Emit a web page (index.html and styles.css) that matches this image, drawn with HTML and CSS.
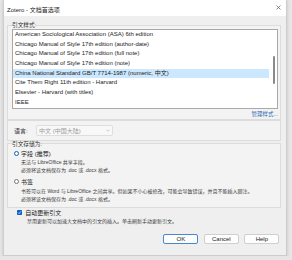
FILE: index.html
```html
<!DOCTYPE html>
<html lang="zh-CN">
<head>
  <meta charset="UTF-8" />
  <title>Zotero - 文档首选项</title>
  <link rel="stylesheet" href="styles.css">
</head>
<body>
  <div class="window">
    <div class="titlebar">
      <span class="title">Zotero - 文档首选项</span>
      <span class="close-btn">
        <svg width="5" height="5" viewBox="0 0 5 5"><path d="M0.5 0.5 L4.5 4.5 M4.5 0.5 L0.5 4.5" stroke="#555" stroke-width="0.7" fill="none"/></svg>
      </span>
    </div>
    <div class="dialog">
      <fieldset class="group styles-group">
        <legend>引文样式:</legend>
        <div class="style-list">
          <div class="style-item">American Sociological Association (ASA) 6th edition</div>
          <div class="style-item">Chicago Manual of Style 17th edition (author-date)</div>
          <div class="style-item">Chicago Manual of Style 17th edition (full note)</div>
          <div class="style-item">Chicago Manual of Style 17th edition (note)</div>
          <div class="style-item selected">China National Standard GB/T 7714-1987 (numeric, 中文)</div>
          <div class="style-item">Cite Them Right 11th edition - Harvard</div>
          <div class="style-item">Elsevier - Harvard (with titles)</div>
          <div class="style-item">IEEE</div>
          <!-- scrollbar thumb drawn over the list -->
          <div class="scroll-thumb"></div>
        </div>
        <div class="manage-row"><a class="manage-link">管理样式...</a></div>
      </fieldset>

      <div class="lang-box">
        <span class="lang-label">语言:</span>
        <div class="select">
          <span>中文 (中国大陆)</span>
          <svg width="4" height="3" viewBox="0 0 4 3"><path d="M0.4 0.7 L2 2.3 L3.6 0.7" stroke="#aaa" stroke-width="0.6" fill="none"/></svg>
        </div>
      </div>

      <fieldset class="group storage-group">
        <legend>引文存储为:</legend>
        <label class="option">
          <span class="radio checked"></span>
          <span>字段 (推荐)</span>
        </label>
        <div class="hint">
          <div>无法与 LibreOffice 共享字段。</div>
          <div>必须将该文档保存为 .doc 或 .docx 格式。</div>
        </div>
        <label class="option second">
          <span class="radio"></span>
          <span>书签</span>
        </label>
        <div class="hint tall">
          <div>书签可以在 Word 与 LibreOffice 之间共享。但如果不小心被修改，可能会导致错误，并且不能插入脚注。</div>
          <div>必须将该文档保存为 .doc 或 .docx 格式。</div>
        </div>
      </fieldset>

      <label class="check-row">
        <svg class="checkbox" width="5" height="5" viewBox="0 0 5 5"><rect x="0" y="0" width="5" height="5" rx="0.8" fill="#0b62c1"/><path d="M1.1 2.6 L2.1 3.6 L3.9 1.4" stroke="#fff" stroke-width="0.7" fill="none"/></svg>
        <span>自动更新引文</span>
      </label>
      <div class="hint check-hint">禁用更新可以加速大文档中的引文的插入。单击刷新手动更新引文。</div>

      <div class="buttons">
        <button class="btn btn-default">OK</button>
        <button class="btn">Cancel</button>
        <button class="btn">Help</button>
      </div>
    </div>
  </div>
</body>
</html>
```

FILE: styles.css
```css
:root {
  --outer-bg: #e6e6e6;
  --window-bg: #efefef;
  --group-bg: #f3f3f3;
  --frame: #dcdcdc;
  --text: #1b1b1b;
  --muted: #3a3a3a;
  --accent: #0b62c1;
  --link: #2d6ab4;
  --select: #cce8ff;
}
html, body {
  margin: 0;
  padding: 0;
}
body {
  background: var(--outer-bg);
  color: var(--text);
  font-family: "Liberation Sans", "Noto Sans CJK SC", sans-serif;
}
.window {
  box-sizing: border-box;
  width: 284px;
  height: 256px;
  margin-left: 3px;
  background: var(--window-bg);
  border: 1px solid #cdcdcd;
  border-top: none;
  box-shadow: 0 1px 3px rgba(0,0,0,0.15);
  display: flex;
  flex-direction: column;
}
.titlebar {
  height: 16px;
  flex: none;
  background: #fff;
  display: flex;
  align-items: center;
  justify-content: space-between;
  padding: 0 5px 0 3px;
  font-size: 6px;
}
.title {
  padding-top: 2px;
}
.close-btn {
  display: flex;
  margin-bottom: 2px;
}
.dialog {
  flex: 1;
  padding: 6px 5px 0 3px;
  display: flex;
  flex-direction: column;
  font-size: 6px;
}
fieldset.group {
  margin: 0;
  min-width: 0;
  border: 1px solid var(--frame);
  background: var(--group-bg);
}
fieldset.group legend {
  padding: 0;
  font-size: 5.7px;
  line-height: 6px;
  color: #333;
}
.styles-group {
  padding: 1px 2px 2px 4px;
}
.style-list {
  position: relative;
  background: #fff;
  border: 1px solid #a9a9a9;
  padding-right: 8px;
}
.style-item {
  height: 9.7px;
  line-height: 9.7px;
  padding-left: 2px;
  font-size: 6px;
  white-space: nowrap;
  overflow: hidden;
}
.style-item.selected {
  background: var(--select);
}
.scroll-thumb {
  position: absolute;
  right: 2.5px;
  top: 26px;
  width: 2px;
  height: 28px;
  border-radius: 1px;
  background: #8a8a8a;
}
.manage-row {
  display: flex;
  justify-content: flex-end;
  margin-top: 2.4px;
  line-height: 6px;
}
.manage-link {
  font-size: 5.5px;
  color: var(--link);
  cursor: pointer;
}
.lang-box {
  display: flex;
  align-items: center;
  border: 1px solid var(--frame);
  background: var(--group-bg);
  padding: 4px 6px;
}
.lang-label {
  width: 22px;
  color: #333;
}
.select {
  box-sizing: border-box;
  width: 77px;
  height: 11px;
  border: 1px solid #dedede;
  border-radius: 2px;
  background: #f8f8f8;
  color: #9c9c9c;
  padding: 0 2px;
  display: flex;
  align-items: center;
  justify-content: space-between;
}
.storage-group {
  margin-top: 5px;
  padding: 3px 6px 4px 4px;
}
.option {
  display: flex;
  align-items: center;
  gap: 2px;
  height: 8px;
  margin-left: 2px;
}
.option.second {
  margin-top: 3.3px;
}
.radio {
  box-sizing: border-box;
  width: 5px;
  height: 5px;
  border-radius: 50%;
  border: 0.7px solid #777;
  background: #fff;
}
.radio.checked {
  border: 1.6px solid var(--accent);
}
.hint {
  font-size: 5px;
  line-height: 7.7px;
  color: var(--muted);
  padding-left: 9px;
  margin-top: 1px;
  white-space: nowrap;
}
.hint.tall {
  line-height: 8px;
}
.check-row {
  display: flex;
  align-items: center;
  gap: 3.3px;
  height: 8px;
  margin-top: 1.3px;
  padding-left: 10px;
}
.check-hint {
  padding-left: 20px;
}
.buttons {
  margin-top: 8px;
  display: flex;
  justify-content: flex-end;
  gap: 5.5px;
  padding-right: 1.7px;
}
.btn {
  width: 35px;
  height: 10.5px;
  padding: 0;
  font-family: "Liberation Sans", "Noto Sans CJK SC", sans-serif;
  font-size: 6px;
  color: var(--text);
  background: #fdfdfd;
  border: 1px solid #cfcfcf;
  border-radius: 2px;
}
.btn-default {
  border-color: #4a86cf;
}
```
